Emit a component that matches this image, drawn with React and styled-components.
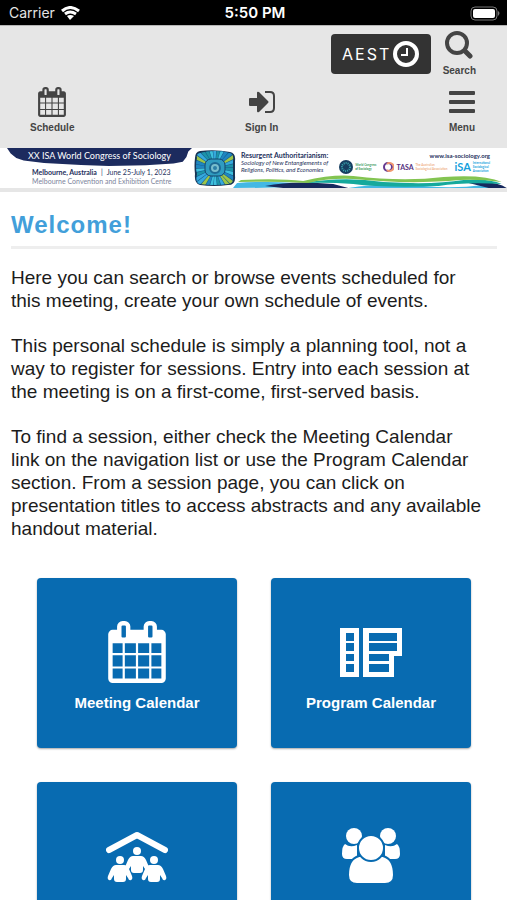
import React from "react";
import styled, { createGlobalStyle } from "styled-components";

const Global = createGlobalStyle`
  *, *::before, *::after { box-sizing: border-box; }
  body { margin: 0; background: #fff; color: #1c1c1c; font-family: "Liberation Sans", Arial, sans-serif; }
  h1, p { margin: 0; }
  svg { display: block; flex: none; }
`;

const StatusBar = styled.div`
  display: grid;
  grid-template-columns: 1fr auto 1fr;
  align-items: center;
  height: 26px;
  padding: 0 6px 0 9px;
  background: #000;
  color: #fff;
  border-bottom: 1px solid #b5b5b5;
  font: 14px/26px Inter, sans-serif;
`;
const Carrier = styled.div`
  display: flex;
  align-items: center;
  gap: 6px;
  color: #e4e4e4;
`;
const Clock = styled.time`
  font-weight: 600;
  font-size: 15px;
`;
const Battery = styled.div`
  justify-self: end;
`;

const Header = styled.header`
  background: #e6e6e6;
  color: #444;
`;
const TopRow = styled.div`
  display: flex;
  justify-content: flex-end;
  align-items: flex-start;
  gap: 12px;
  height: 56px;
  padding: 1px 31px 0 0;
`;
const ZoneButton = styled.button`
  display: flex;
  align-items: center;
  justify-content: center;
  gap: 2px;
  width: 100px;
  height: 40px;
  margin-top: 7px;
  padding: 0;
  border: 0;
  border-radius: 4px;
  background: #333;
  color: #fff;
  font: 16px/20px Inter, sans-serif;
  letter-spacing: 2px;
`;
const NavRow = styled.nav`
  display: flex;
  justify-content: space-between;
  height: 66px;
  padding: 2px 32px 0 30px;
`;
const NavLink = styled.a`
  display: flex;
  flex-direction: column;
  align-items: center;
  gap: 2px;
  color: #444;
  text-decoration: none;
  font-size: 10px;
  font-weight: bold;
  line-height: 12px;
`;
const IconBox = styled.span`
  display: flex;
  align-items: center;
  justify-content: center;
  height: 36px;
`;

const Banner = styled.section`
  position: relative;
  display: grid;
  grid-template-columns: minmax(0, 185fr) minmax(0, 44fr) minmax(0, 100fr) minmax(0, 164fr);
  height: 44px;
  padding: 0 7px;
  border-bottom: 4px solid #e6e6e6;
  background: #fff;
  color: #25305c;
  font-family: Lato, sans-serif;
  overflow: hidden;
`;
const Waves = styled.svg`
  position: absolute;
  right: 0;
  bottom: 0;
  width: 54%;
  height: 14px;
`;
const Congress = styled.div`
  display: flex;
  flex-direction: column;
  white-space: nowrap;
`;
const CongressName = styled.div`
  height: 18px;
  margin-bottom: 2px;
  padding-left: 21px;
  background: #1c2b5e;
  color: #fff;
  clip-path: polygon(0 0, 2% 30%, 5% 55%, 9% 70%, 20% 84%, 40% 95%, 55% 100%, 75% 96%, 90% 86%, 95% 76%, 97% 50%, 98% 20%, 100% 0);
  font-size: 9px;
  line-height: 16px;
`;
const CongressDate = styled.div`
  display: flex;
  gap: 4px;
  padding-left: 25px;
  font-size: 7px;
  line-height: 9px;
`;
const Venue = styled.div`
  padding-left: 25px;
  color: #7d849c;
  font-size: 7px;
  line-height: 9px;
`;
const Artwork = styled.div`
  padding: 1px 0 0 2px;
`;
const Theme = styled.div`
  padding: 4px 0 0 5px;
  font-size: 6px;
  line-height: 7px;
  white-space: nowrap;
`;
const ThemeName = styled.div`
  font-size: 7px;
  font-weight: bold;
`;
const Partners = styled.div`
  display: flex;
  flex-direction: column;
  align-items: flex-end;
  padding: 3px 10px 0 0;
`;
const Site = styled.a`
  color: #25305c;
  font-size: 6px;
  font-weight: bold;
  line-height: 9px;
  text-decoration: none;
`;
const Logos = styled.div`
  display: flex;
  align-items: center;
  gap: 7px;
`;
const Logo = styled.div`
  display: flex;
  align-items: center;
  gap: 2px;
  color: ${(p) => p.$color};
  font-size: ${(p) => p.$size}px;
  font-weight: bold;
  line-height: 14px;
`;
const Caption = styled.span`
  color: ${(p) => p.$color};
  font-size: 3px;
  line-height: 4px;
  white-space: nowrap;
`;

const Main = styled.main`
  padding: 19px 10px 34px 11px;
`;
const Title = styled.h1`
  padding-bottom: 8px;
  border-bottom: 3px solid #eee;
  color: #429fda;
  font-size: 24px;
  line-height: 27px;
  letter-spacing: 1px;
`;
const Intro = styled.div`
  display: flex;
  flex-direction: column;
  gap: 22px;
  padding: 17px 11px 0 0;
  font-size: 19px;
  line-height: 23px;
`;
const Tiles = styled.div`
  display: grid;
  grid-template-columns: 1fr 1fr;
  gap: 34px;
  padding: 38px 26px 0;
`;
const Tile = styled.a`
  display: flex;
  flex-direction: column;
  align-items: center;
  height: 170px;
  padding-top: 42px;
  border-radius: 4px;
  background: #086bb1;
  box-shadow: 0 1px 2px rgba(0, 0, 0, 0.35);
  color: #fff;
  font-size: 15px;
  font-weight: bold;
  line-height: 18px;
  text-decoration: none;
`;
const TileIcon = styled.span`
  display: flex;
  align-items: center;
  height: 64px;
  margin-bottom: 10px;
`;

const cells = [[640, 288], [992, 320], [1376, 288]].flatMap(([y, h]) =>
  [[128, 288], [480, 320], [864, 320], [1248, 288]].map(([x, w]) => `M${x} ${y}v${h}h${w}v${-h}z`)
).join("");

function CalendarIcon({ width, height }) {
  return (
    <svg width={width} height={height} viewBox="0 0 1664 1792" fill="currentColor" aria-hidden="true">
      <path fillRule="evenodd" d={"M128 256H256V160Q256 94 303 47T416 0H480Q546 0 593 47T640 160V256H1024V160Q1024 94 1071 47T1184 0H1248Q1314 0 1361 47T1408 160V256H1536Q1588 256 1626 294T1664 384V1664Q1664 1716 1626 1754T1536 1792H128Q76 1792 38 1754T0 1664V384Q0 332 38 294T128 256ZM384 160V448Q384 480 416 480H480Q512 480 512 448V160Q512 128 480 128H416Q384 128 384 160ZM1152 160V448Q1152 480 1184 480H1248Q1280 480 1280 448V160Q1280 128 1248 128H1184Q1152 128 1152 160Z" + cells} />
    </svg>
  );
}

function ProgramIcon() {
  return (
    <svg width="62" height="49" viewBox="0 0 62 49" fill="#fff" aria-hidden="true">
      <path fillRule="evenodd" d="M0 0h19v49H0zM6 5v8h8V5zM6 15v8h8v-8zM6 26v7h8v-7zM6 36v8h8v-8zM23 0h39v28h-8v21H23zM29 5v8h28V5zM29 15v8h28v-8zM29 26v7h20v-7zM29 36v8h20v-8z" />
    </svg>
  );
}

function Person({ x, y }) {
  return (
    <g transform={`translate(${x} ${y})`}>
      <circle cx="0" cy="4" r="4" />
      <path d="M-4 9H4Q7 9 9 13L12 20Q13 23 11 24Q9 25 8 22L6 19V23Q6 26 3 26H-3Q-6 26-6 23V19L-8 22Q-9 25-11 24Q-13 23-12 20L-9 13Q-7 9-4 9Z" />
    </g>
  );
}

function MeetingIcon() {
  return (
    <svg width="62" height="51" viewBox="0 0 62 51" fill="#fff" aria-hidden="true">
      <path d="M3 19L31 4L59 19" fill="none" stroke="#fff" strokeWidth="6" strokeLinecap="round" strokeLinejoin="round" />
      <Person x={31} y={16} />
      <Person x={14} y={25} />
      <Person x={48} y={25} />
    </svg>
  );
}

function PeopleIcon() {
  return (
    <svg width="58" height="56" viewBox="0 0 58 56" fill="#fff" aria-hidden="true">
      <circle cx="12" cy="8" r="8" />
      <circle cx="46" cy="8" r="8" />
      <path d="M3 16Q8 20 15 17V31H5Q0 31 0 26Q0 18 3 16ZM55 16Q50 20 43 17V31H53Q58 31 58 26Q58 18 55 16Z" />
      <g stroke="#086bb1" strokeWidth="2">
        <path d="M17 28H41Q52 31 52 47Q52 56 43 56H15Q6 56 6 47Q6 31 17 28Z" />
        <circle cx="29" cy="20" r="13" />
      </g>
    </svg>
  );
}

function WifiIcon() {
  return (
    <svg width="19" height="14" viewBox="0 0 19 14" fill="none" stroke="#fff" aria-hidden="true">
      <path d="M1 5Q9 -2 18 5M4 8Q9 4 15 8" strokeWidth="3" />
      <path d="M6 10Q9 8 13 10L9 14Z" fill="#fff" stroke="none" />
    </svg>
  );
}

function ArtMark() {
  const rays = Array.from({ length: 30 }, (_, i) => i);
  const tones = ["#35a9dc", "#9cc548", "#1f86c0", "#3dc0dc", "#1c94a8"];
  return (
    <svg width="42" height="37" viewBox="0 0 42 37" aria-hidden="true">
      <defs><clipPath id="frame"><path d="M6 4Q21 0 36 4Q40 5 39 12V27Q40 35 34 35Q20 37 6 35Q1 34 3 25Q1 17 3 9Q2 5 6 4Z" /></clipPath></defs>
      <path d="M6 2Q21 0 36 3Q42 4 41 12V27Q42 36 34 36Q20 38 6 36Q0 34 1 25Q0 17 1 9Q1 3 6 2Z" fill="#173454" />
      <g clipPath="url(#frame)">
        <rect width="42" height="37" fill="#17598c" />
        {rays.map((i) => (
          <path key={i} d="M21 19L18 -9H23Z" fill={tones[(i * 3 + (i % 4)) % 5]} transform={`rotate(${i * 12} 21 19)`} />
        ))}
      </g>
      <rect x="11" y="10" width="20" height="17" rx="6" fill="#2f9cc0" stroke="#17456b" />
      <circle cx="21" cy="19" r="5" fill="#79becd" stroke="#1d6a94" strokeWidth="2" />
      <circle cx="21" cy="19" r="2" fill="#2b7fa6" />
    </svg>
  );
}

const tiles = [
  { id: "meeting", label: "Meeting Calendar", icon: <CalendarIcon width={58} height={62} /> },
  { id: "program", label: "Program Calendar", icon: <ProgramIcon /> },
  { id: "sessions", icon: <MeetingIcon /> },
  { id: "people", icon: <PeopleIcon /> },
];

export default function App() {
  return (
    <>
      <Global />
      <StatusBar>
        <Carrier>Carrier <WifiIcon /></Carrier>
        <Clock>5:50 PM</Clock>
        <Battery>
          <svg width="31" height="15" viewBox="0 0 31 15" aria-label="Battery full">
            <rect x="1" y="1" width="26" height="13" rx="4" fill="none" stroke="#777" />
            <rect x="3" y="3" width="22" height="9" rx="2" fill="#fff" />
            <path d="M28 5Q31 7 28 10Z" fill="#777" />
          </svg>
        </Battery>
      </StatusBar>
      <Header>
        <TopRow>
          <ZoneButton type="button">
            AEST
            <svg width="26" height="26" viewBox="0 0 26 26" fill="none" stroke="#fff" aria-hidden="true">
              <circle cx="13" cy="13" r="11" strokeWidth="4" />
              <path d="M14 7v7H8" strokeWidth="2" />
            </svg>
          </ZoneButton>
          <NavLink href="#search">
            <IconBox>
              <svg width="28" height="28" viewBox="0 0 28 28" fill="none" stroke="currentColor" aria-hidden="true">
                <circle cx="12" cy="12" r="10" strokeWidth="4" />
                <path d="M20 20l5 5" strokeWidth="5" strokeLinecap="round" />
              </svg>
            </IconBox>
            Search
          </NavLink>
        </TopRow>
        <NavRow>
          <NavLink href="#schedule"><IconBox><CalendarIcon width={28} height={30} /></IconBox>Schedule</NavLink>
          <NavLink href="#signin">
            <IconBox>
              <svg width="26" height="22" viewBox="0 0 26 22" fill="currentColor" aria-hidden="true">
                <path d="M0 8Q0 7 1 7H8V2Q8 0 10 1L19 10Q20 11 19 12L10 21Q8 22 8 20V15H1Q0 15 0 14Z" />
                <path d="M16 1H21Q25 1 25 5V17Q25 21 21 21H16" fill="none" stroke="currentColor" strokeWidth="2" />
              </svg>
            </IconBox>
            Sign In
          </NavLink>
          <NavLink href="#menu">
            <IconBox>
              <svg width="26" height="22" viewBox="0 0 26 22" fill="currentColor" aria-hidden="true">
                <rect width="26" height="4" rx="1" /><rect y="9" width="26" height="4" rx="1" /><rect y="18" width="26" height="4" rx="1" />
              </svg>
            </IconBox>
            Menu
          </NavLink>
        </NavRow>
      </Header>
      <Banner>
        <Waves viewBox="0 0 273 14" preserveAspectRatio="none" aria-hidden="true">
          <path d="M0 14L4 9Q45 6 80 11Q60 14 0 14ZM115 14Q150 8 190 12Q220 15 250 11L262 14Z" fill="#43b8e4" />
          <path d="M32 12Q60 6 100 10L115 14H50ZM150 12Q170 6 190 12ZM235 9Q262 6 273 14H255Z" fill="#17295d" />
          <path d="M70 9Q110 2 150 8Q200 11 230 6Q255 4 268 10Q230 8 205 12Q150 14 120 10Q95 8 70 9Z" fill="#15a99c" />
          <path d="M8 6Q45 4 70 7Q100 0 120 2Q170 8 210 3Q250 0 268 8Q240 4 215 7Q170 10 120 5Q95 4 75 9Q40 7 5 8Z" fill="#83c451" />
        </Waves>
        <Congress>
          <CongressName>XX ISA World Congress of Sociology</CongressName>
          <CongressDate><b>Melbourne, Australia</b><span>|</span><span>June 25-July 1, 2023</span></CongressDate>
          <Venue>Melbourne Convention and Exhibition Centre</Venue>
        </Congress>
        <Artwork><ArtMark /></Artwork>
        <Theme>
          <ThemeName>Resurgent Authoritarianism:</ThemeName>
          <i>Sociology of New Entanglements of<br />Religions, Politics, and Economies</i>
        </Theme>
        <Partners>
          <Site href="https://www.isa-sociology.org">www.isa-sociology.org</Site>
          <Logos>
            <Logo $color="#3d9c60" $size={4}>
              <svg width="14" height="14" viewBox="0 0 14 14" aria-hidden="true">
                <circle cx="7" cy="7" r="7" fill="#163e60" /><circle cx="7" cy="7" r="4" fill="none" stroke="#39a3ad" strokeWidth="2" strokeDasharray="1 1" />
              </svg>
              <Caption $color="#3d9c60">World Congress<br /><b>of Sociology</b></Caption>
            </Logo>
            <Logo $color="#553080" $size={7}>
              <svg width="11" height="11" viewBox="0 0 11 11" fill="none" strokeWidth="3" aria-hidden="true">
                <circle cx="5" cy="5" r="4" stroke="#653990" strokeWidth="2" />
                <path d="M4 2A4 4 0 1 1 4 8" stroke="#f29a70" strokeWidth="2" />
              </svg>
              TASA
              <Caption $color="#efb187">The Australian<br />Sociological Association</Caption>
            </Logo>
            <Logo $color="#159fdc" $size={11}>
              iSA
              <Caption $color="#159fdc">International<br />Sociological<br />Association</Caption>
            </Logo>
          </Logos>
        </Partners>
      </Banner>
      <Main>
        <Title>Welcome!</Title>
        <Intro>
          <p>Here you can search or browse events scheduled for this meeting, create your own schedule of events.</p>
          <p>This personal schedule is simply a planning tool, not a way to register for sessions. Entry into each session at the meeting is on a first-come, first-served basis.</p>
          <p>To find a session, either check the Meeting Calendar link on the navigation list or use the Program Calendar section. From a session page, you can click on presentation titles to access abstracts and any available handout material.</p>
        </Intro>
        <Tiles>
          {tiles.map((t) => (
            <Tile key={t.id} href={`#${t.id}`} aria-label={t.label || t.id}>
              <TileIcon>{t.icon}</TileIcon>
              {t.label}
            </Tile>
          ))}
        </Tiles>
      </Main>
    </>
  );
}
